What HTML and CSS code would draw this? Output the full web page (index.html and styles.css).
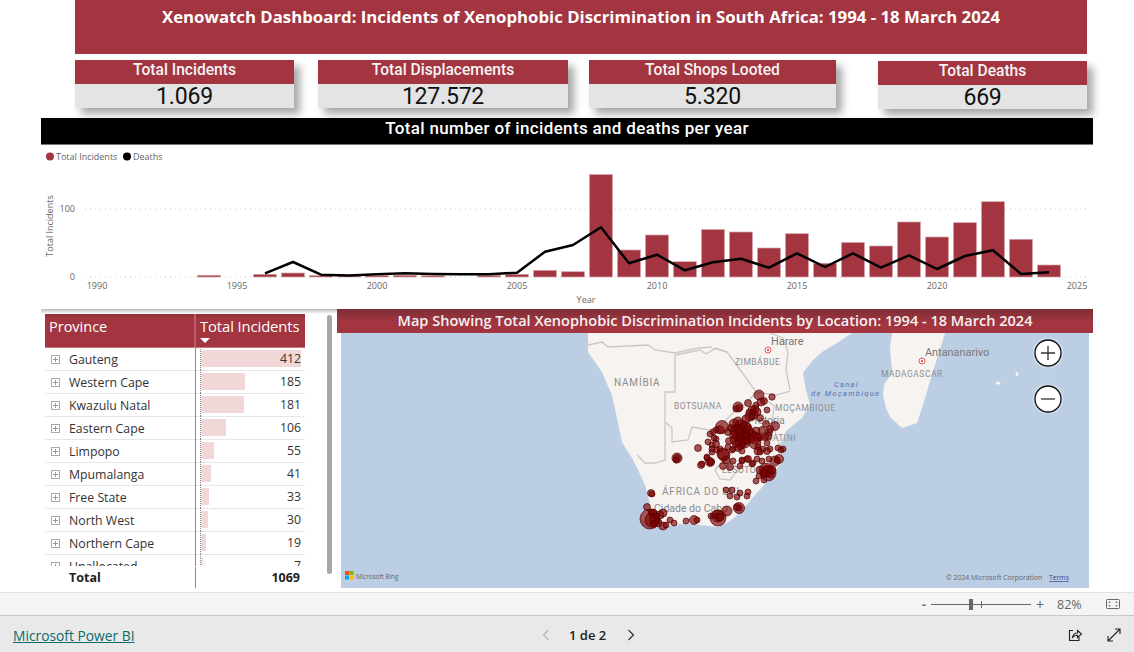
FILE: index.html
```html
<!DOCTYPE html>
<html lang="en">
<head>
<meta charset="utf-8">
<title>Xenowatch Dashboard</title>
<link rel="stylesheet" href="styles.css">
</head>
<body>
<main class="report">
  <h1 class="banner">Xenowatch Dashboard: Incidents of Xenophobic Discrimination in South Africa: 1994 - 18 March 2024</h1>
  <section class="kpis">
    <div class="kpi kpi-a"><div class="kpi-label">Total Incidents</div><div class="kpi-value">1.069</div></div>
    <div class="kpi kpi-b"><div class="kpi-label">Total Displacements</div><div class="kpi-value">127.572</div></div>
    <div class="kpi kpi-c"><div class="kpi-label">Total Shops Looted</div><div class="kpi-value">5.320</div></div>
    <div class="kpi kpi-d"><div class="kpi-label">Total Deaths</div><div class="kpi-value">669</div></div>
  </section>
  <h2 class="chart-title">Total number of incidents and deaths per year</h2>
  <svg class="chart" viewBox="41 145 1052 164" width="1052" height="164">
    <circle cx="50" cy="156.500" r="4" fill="#a33540"/>
    <text class="legend" x="56" y="160">Total Incidents</text>
    <circle cx="127" cy="156.500" r="4" fill="#000"/>
    <text class="legend" x="133" y="160">Deaths</text>
    <line class="grid" x1="85" x2="1087" y1="209" y2="209"/>
    <line class="grid" x1="85" x2="1087" y1="277" y2="277"/>
    <text class="axis" x="75" y="212" text-anchor="end">100</text>
    <text class="axis" x="75" y="280" text-anchor="end">0</text>
    <text class="legend" transform="translate(53 226) rotate(-90)" text-anchor="middle">Total Incidents</text>
    <g class="axis-x">
      <text class="axis" x="97" y="289" text-anchor="middle">1990</text>
      <text class="axis" x="237" y="289" text-anchor="middle">1995</text>
      <text class="axis" x="377" y="289" text-anchor="middle">2000</text>
      <text class="axis" x="517" y="289" text-anchor="middle">2005</text>
      <text class="axis" x="657" y="289" text-anchor="middle">2010</text>
      <text class="axis" x="797" y="289" text-anchor="middle">2015</text>
      <text class="axis" x="937" y="289" text-anchor="middle">2020</text>
      <text class="axis" x="1077" y="289" text-anchor="middle">2025</text>
    </g>
    <text class="legend" x="586" y="303" text-anchor="middle">Year</text>
    <g class="bars">
      <rect x="197.500" y="275.300" width="23" height="1.700"/>
      <rect x="253.500" y="274.300" width="23" height="2.700"/>
      <rect x="281.500" y="273" width="23" height="4"/>
      <rect x="309.500" y="275.500" width="23" height="1.500"/>
      <rect x="337.500" y="276" width="23" height="1"/>
      <rect x="365.500" y="275.700" width="23" height="1.300"/>
      <rect x="393.500" y="275.300" width="23" height="1.700"/>
      <rect x="421.500" y="275.700" width="23" height="1.300"/>
      <rect x="477.500" y="275.500" width="23" height="1.500"/>
      <rect x="505.500" y="274.300" width="23" height="2.700"/>
      <rect x="533.500" y="270.300" width="23" height="6.700"/>
      <rect x="561.500" y="271.700" width="23" height="5.300"/>
      <rect x="589.500" y="174.500" width="23" height="102.500"/>
      <rect x="617.500" y="250" width="23" height="27"/>
      <rect x="645.500" y="235" width="23" height="42"/>
      <rect x="673.500" y="261.700" width="23" height="15.300"/>
      <rect x="701.500" y="229.500" width="23" height="47.500"/>
      <rect x="729.500" y="232" width="23" height="45"/>
      <rect x="757.500" y="248" width="23" height="29"/>
      <rect x="785.500" y="233.700" width="23" height="43.300"/>
      <rect x="813.500" y="263.300" width="23" height="13.700"/>
      <rect x="841.500" y="242.500" width="23" height="34.500"/>
      <rect x="869.500" y="246" width="23" height="31"/>
      <rect x="897.500" y="222" width="23" height="55"/>
      <rect x="925.500" y="237" width="23" height="40"/>
      <rect x="953.500" y="222.700" width="23" height="54.300"/>
      <rect x="981.500" y="201.700" width="23" height="75.300"/>
      <rect x="1009.500" y="239.300" width="23" height="37.700"/>
      <rect x="1037.500" y="265" width="23" height="12"/>
    </g>
    <polyline class="trend" points="265,273.300 293,262 321,274.700 349,275.500 377,274.300 405,273.300 433,274 461,274.300 489,274.300 517,272.700 545,251.700 573,245 601,227.300 629,263.300 657,254.700 685,270.300 713,262.300 741,258.700 769,267.700 797,253.300 825,267 853,253.300 881,267.700 909,255.300 937,269 965,256 993,250.300 1021,274 1049,272.300"/>
  </svg>
  <section class="lower">
    <div class="table-panel">
      <div class="table">
        <div class="thead">
          <div class="th th-name">Province</div>
          <div class="th th-num">Total Incidents<span class="sort-arrow"></span></div>
        </div>
        <div class="tbody">
          <div class="row"><span class="expand"></span><span class="name">Gauteng</span><span class="cell"><span class="bar" style="width:100px"></span><span class="num">412</span></span></div>
          <div class="row"><span class="expand"></span><span class="name">Western Cape</span><span class="cell"><span class="bar" style="width:44px"></span><span class="num">185</span></span></div>
          <div class="row"><span class="expand"></span><span class="name">Kwazulu Natal</span><span class="cell"><span class="bar" style="width:43px"></span><span class="num">181</span></span></div>
          <div class="row"><span class="expand"></span><span class="name">Eastern Cape</span><span class="cell"><span class="bar" style="width:25px"></span><span class="num">106</span></span></div>
          <div class="row"><span class="expand"></span><span class="name">Limpopo</span><span class="cell"><span class="bar" style="width:13px"></span><span class="num">55</span></span></div>
          <div class="row"><span class="expand"></span><span class="name">Mpumalanga</span><span class="cell"><span class="bar" style="width:10px"></span><span class="num">41</span></span></div>
          <div class="row"><span class="expand"></span><span class="name">Free State</span><span class="cell"><span class="bar" style="width:8px"></span><span class="num">33</span></span></div>
          <div class="row"><span class="expand"></span><span class="name">North West</span><span class="cell"><span class="bar" style="width:7px"></span><span class="num">30</span></span></div>
          <div class="row"><span class="expand"></span><span class="name">Northern Cape</span><span class="cell"><span class="bar" style="width:5px"></span><span class="num">19</span></span></div>
          <div class="row"><span class="expand"></span><span class="name">Unallocated</span><span class="cell"><span class="bar" style="width:2px"></span><span class="num">7</span></span></div>
        </div>
        <div class="tfoot"><span class="total-name">Total</span><span class="total-num">1069</span></div>
      </div>
      <div class="scrollbar"></div>
    </div>
    <div class="map-panel">
      <h2 class="map-title">Map Showing Total Xenophobic Discrimination Incidents by Location: 1994 - 18 March 2024</h2>
      <div class="map">
        <svg class="map-svg" viewBox="341 333 748 255" width="748" height="255">
          <path class="land" d="M588 333L588 352L595 362L602 372L607 384L612 395L617 418L622 442L628 452L632 458L639 472L645 485L648 496L650 505L643 512L641 518L648 524L655 528L670 526L685 523L700 525L718 527L727 523L735 517L746 506L755 495L765 484L775 472L782 460L780 445L786 431L802 418L810 405L806 390L803 373L812 361L822 352L837 343L852 333Z"/>
          <path class="land" d="M892 333L890 348L892 372L884 385L883 395L886 408L890 417L902 428L917 423L923 405L928 388L936 362L945 333Z"/>
          <ellipse class="land" cx="998" cy="383" rx="2.500" ry="1.500"/>
          <ellipse class="land" cx="1017" cy="374" rx="1.500" ry="2"/>
          <path class="border" d="M588 345L602 342L608 347L648 345L655 350L675 353L698 348L712 347"/>
          <path class="border" d="M675 355L700 350L706 354L716 348L727 352"/>
          <path class="border" d="M675 355L675 392L665 392L665 445L665 460L655 463L645 463L637 455"/>
          <path class="border" d="M665 422L672 428L672 442L688 440L692 427L710 430L722 424L734 412L748 402L756 392"/>
          <path class="border" d="M727 352L713 348M727 352L741 371L756 392L776 395L790 391"/>
          <path class="border" d="M790 390L786 370L788 352L783 338L770 333"/>
          <path class="border" d="M756 392L774 406L772 424L780 445"/>
          <path class="border" d="M715 470L722 462L733 462L738 470L730 480L720 479Z"/>
          <text class="city" x="771" y="344.500">Harare</text>
          <circle class="capital-ring" cx="768" cy="350" r="3"/><circle class="capital" cx="768" cy="350" r="1.200"/>
          <text class="country" x="735" y="365">ZIMBÁBUE</text>
          <text class="city" x="925" y="356">Antananarivo</text>
          <circle class="capital-ring" cx="922" cy="361" r="3"/><circle class="capital" cx="922" cy="361" r="1.200"/>
          <text class="country" x="881" y="377">MADAGASCAR</text>
          <text class="sea" x="834" y="387">Canal</text>
          <text class="sea" x="811" y="396">de Moçambique</text>
          <text class="country" x="775" y="411">MOÇAMBIQUE</text>
          <text class="country-lg" x="614" y="386">NAMÍBIA</text>
          <text class="country" x="674" y="409">BOTSUANA</text>
          <text class="country-lg" x="662" y="495">ÁFRICA DO SUL</text>
          <text class="city-sm" x="654" y="512">Cidade do Cabo</text>
          <text class="country" x="722" y="473">LESOTO</text>
          <text class="country" x="754" y="441">ESWATINI</text>
          <text class="city-sm" x="748" y="424">Pretoria</text>
          <g class="bubbles">
            <circle cx="759" cy="395" r="5"/><circle cx="772" cy="397" r="3.200"/><circle cx="748" cy="403" r="3.500"/><circle cx="761" cy="402" r="4"/><circle cx="764" cy="401" r="3.500"/><circle cx="755" cy="409" r="4"/><circle cx="739" cy="408" r="3.500"/><circle cx="738" cy="407" r="5"/><circle cx="736" cy="409" r="3"/>
            <circle cx="752" cy="410" r="4"/><circle cx="757" cy="412" r="4"/><circle cx="750" cy="416" r="5"/><circle cx="746" cy="419" r="4"/><circle cx="767" cy="410" r="3"/><circle cx="754" cy="415" r="4"/><circle cx="760" cy="418" r="3.500"/><circle cx="766" cy="424" r="3.500"/><circle cx="775" cy="426" r="4.500"/><circle cx="770" cy="429" r="3.500"/><circle cx="769" cy="432" r="3.500"/><circle cx="768" cy="436" r="4"/><circle cx="753" cy="412" r="3"/><circle cx="756" cy="405" r="3"/><circle cx="749" cy="412" r="3"/><circle cx="752" cy="417" r="3"/>
            <circle cx="738" cy="422" r="5"/><circle cx="734" cy="424" r="5"/><circle cx="722" cy="427" r="6.500"/><circle cx="720" cy="430" r="4"/><circle cx="716" cy="430" r="3"/><circle cx="713" cy="432" r="3"/><circle cx="710" cy="434" r="3"/><circle cx="708" cy="442" r="3"/><circle cx="716" cy="439" r="3"/>
            <circle cx="740" cy="425" r="5"/><circle cx="745" cy="428" r="6"/><circle cx="735" cy="430" r="5"/><circle cx="742" cy="432" r="6"/><circle cx="748" cy="432" r="6"/><circle cx="738" cy="435" r="6"/><circle cx="744" cy="437" r="7"/><circle cx="750" cy="438" r="5"/><circle cx="741" cy="440" r="7"/><circle cx="735" cy="440" r="5"/><circle cx="745" cy="443" r="5"/><circle cx="741" cy="434" r="4"/><circle cx="745" cy="436" r="4"/><circle cx="740" cy="438" r="4"/><circle cx="743" cy="441" r="4"/><circle cx="737" cy="428" r="3.500"/><circle cx="744" cy="424" r="3.500"/><circle cx="748" cy="427" r="3.500"/><circle cx="733" cy="435" r="3.500"/><circle cx="739" cy="431" r="3.500"/><circle cx="747" cy="441" r="3.500"/><circle cx="742" cy="445" r="3.500"/><circle cx="736" cy="444" r="3.500"/><circle cx="752" cy="433" r="3.500"/><circle cx="728" cy="432" r="3.500"/><circle cx="731" cy="428" r="3.500"/>
            <circle cx="756" cy="431" r="4"/><circle cx="757" cy="437" r="4"/><circle cx="755" cy="438" r="6"/><circle cx="760" cy="437" r="3.500"/><circle cx="762" cy="430" r="3.500"/><circle cx="765" cy="437" r="3.500"/><circle cx="755" cy="443" r="6"/><circle cx="758" cy="447" r="3"/><circle cx="767" cy="443" r="3"/><circle cx="770" cy="449" r="3"/><circle cx="729" cy="441" r="3.500"/><circle cx="728" cy="447" r="3"/><circle cx="733" cy="449" r="3"/><circle cx="738" cy="448" r="3.500"/><circle cx="742" cy="451" r="3"/><circle cx="714" cy="438" r="3"/><circle cx="716" cy="444" r="3.500"/><circle cx="712" cy="445" r="3"/><circle cx="717" cy="450" r="3"/><circle cx="712" cy="452" r="3"/><circle cx="720" cy="449" r="3"/>
            <circle cx="724" cy="455" r="6"/><circle cx="726" cy="460" r="4"/><circle cx="733" cy="461" r="3"/><circle cx="707" cy="458" r="3"/><circle cx="711" cy="462" r="3.500"/><circle cx="702" cy="464" r="3"/><circle cx="758" cy="451" r="4"/><circle cx="760" cy="452" r="3"/><circle cx="763" cy="449" r="3"/><circle cx="767" cy="451" r="3.500"/><circle cx="778" cy="448" r="3"/><circle cx="783" cy="449" r="3"/><circle cx="781" cy="450" r="3"/>
            <circle cx="768" cy="473" r="8"/><circle cx="766" cy="470" r="7"/><circle cx="768" cy="471" r="5"/><circle cx="770" cy="474" r="4"/><circle cx="764" cy="473" r="4"/><circle cx="760" cy="470" r="4"/><circle cx="772" cy="470" r="4"/><circle cx="775" cy="461" r="5"/><circle cx="779" cy="459" r="4.500"/><circle cx="777" cy="460" r="3"/><circle cx="769" cy="459" r="3"/><circle cx="762" cy="461" r="3"/><circle cx="757" cy="459" r="3"/><circle cx="747" cy="459" r="3"/><circle cx="742" cy="461" r="3"/><circle cx="753" cy="463" r="3"/><circle cx="764" cy="480" r="3"/><circle cx="759" cy="476" r="3"/><circle cx="756" cy="481" r="3"/>
            <circle cx="677" cy="458" r="5"/><circle cx="677" cy="458" r="3.500"/><circle cx="676" cy="460" r="3"/><circle cx="698" cy="448" r="3.500"/><circle cx="712" cy="449" r="3"/><circle cx="723" cy="454" r="6"/><circle cx="707" cy="457" r="3"/><circle cx="710" cy="462" r="4.500"/><circle cx="710" cy="462" r="3"/><circle cx="701" cy="465" r="3.500"/><circle cx="723" cy="466" r="3.500"/><circle cx="730" cy="467" r="3.500"/><circle cx="740" cy="466" r="3"/><circle cx="748" cy="459" r="3.500"/><circle cx="742" cy="460" r="3"/><circle cx="752" cy="464" r="3"/><circle cx="732" cy="450" r="3"/><circle cx="740" cy="447" r="3"/>
            <circle cx="651" cy="493" r="3.500"/><circle cx="652" cy="494" r="3"/><circle cx="726" cy="490" r="3"/><circle cx="732" cy="490" r="3"/><circle cx="730" cy="496" r="3"/><circle cx="740" cy="493" r="3"/><circle cx="737" cy="497" r="3"/><circle cx="748" cy="492" r="3"/><circle cx="747" cy="496" r="3"/>
            <circle cx="647" cy="507" r="3.500"/><circle cx="650" cy="519" r="10"/><circle cx="652" cy="520" r="7"/><circle cx="653" cy="513" r="4"/><circle cx="660" cy="515" r="4"/><circle cx="663" cy="513" r="4"/><circle cx="658" cy="523" r="4"/><circle cx="655" cy="520" r="5"/><circle cx="651" cy="512" r="3"/><circle cx="656" cy="516" r="3"/><circle cx="654" cy="524" r="3.500"/><circle cx="663" cy="526" r="4"/><circle cx="666" cy="525" r="3"/><circle cx="670" cy="520" r="3"/><circle cx="674" cy="523" r="3"/>
            <circle cx="686" cy="521" r="3"/><circle cx="694" cy="520" r="4.500"/><circle cx="697" cy="520" r="3"/><circle cx="711" cy="516" r="3"/><circle cx="718" cy="518" r="8"/><circle cx="718" cy="516" r="6"/><circle cx="717" cy="516" r="3"/><circle cx="720" cy="517" r="4"/><circle cx="727" cy="511" r="5"/><circle cx="737" cy="507" r="3.500"/><circle cx="739" cy="508" r="5.500"/><circle cx="739" cy="508" r="3"/>
          </g>
          <rect x="345" y="571" width="4" height="4" fill="#f25022"/><rect x="349.500" y="571" width="4" height="4" fill="#7fba00"/><rect x="345" y="575.500" width="4" height="4" fill="#00a4ef"/><rect x="349.500" y="575.500" width="4" height="4" fill="#ffb900"/>
          <text class="attrib attrib-bing" x="356" y="579">Microsoft Bing</text>
          <text class="attrib" x="946" y="580">© 2024 Microsoft Corporation</text>
          <text class="terms" x="1049" y="580">Terms</text>
        </svg>
        <button class="map-btn map-btn-in" aria-label="Zoom in"><svg viewBox="0 0 28 28" width="28" height="28"><circle cx="14" cy="14" r="13" fill="#fff" stroke="#111" stroke-width="1.300"/><path d="M7 14H21M14 7V21" stroke="#333" stroke-width="1.300"/></svg></button>
        <button class="map-btn map-btn-out" aria-label="Zoom out"><svg viewBox="0 0 28 28" width="28" height="28"><circle cx="14" cy="14" r="13" fill="#fff" stroke="#111" stroke-width="1.300"/><path d="M7 14H21" stroke="#333" stroke-width="1.300"/></svg></button>
      </div>
    </div>
  </section>
</main>
<div class="zoom-bar">
  <span class="zoom-minus">-</span>
  <span class="slider"><span class="slider-tick"></span><span class="slider-thumb"></span></span>
  <span class="zoom-plus">+</span>
  <span class="zoom-pct">82%</span>
  <svg class="fit-icon" viewBox="0 0 14 10" width="14" height="10"><rect x=".5" y=".5" width="13" height="9" rx="1" fill="none" stroke="#666"/><path d="M3 4V3H4.500M11 4V3H9.500M3 6V7H4.500M11 6V7H9.500" fill="none" stroke="#666"/></svg>
</div>
<footer class="footer">
  <a class="brand" href="#">Microsoft Power BI</a>
  <nav class="pager">
    <svg class="chev" viewBox="0 0 8 12" width="8" height="12"><path d="M6.500 1L1.500 6L6.500 11" fill="none" stroke="#b5b5b5" stroke-width="1.200"/></svg>
    <span class="page-text">1 de 2</span>
    <svg class="chev" viewBox="0 0 8 12" width="8" height="12"><path d="M1.500 1L6.500 6L1.500 11" fill="none" stroke="#333" stroke-width="1.200"/></svg>
  </nav>
  <div class="tools">
    <svg viewBox="0 0 14 14" width="14" height="14"><path d="M5 2.500H1.500V12.500H11V9" fill="none" stroke="#222" stroke-width="1.100"/><path d="M4.500 9.500C5 6.500 7 5 9.500 5V2.500L13.500 6L9.500 9.500V7.200C7.500 7.200 5.800 8 4.500 9.500Z" fill="none" stroke="#222" stroke-width="1.100"/></svg>
    <svg viewBox="0 0 14 14" width="14" height="14"><path d="M1 13L13 1M8 1H13V6M1 8V13H6" fill="none" stroke="#222" stroke-width="1.100"/></svg>
  </div>
</footer>
</body>
</html>
```
FILE: styles.css
```css
* { box-sizing: border-box; }
html, body { margin: 0; padding: 0; }
body {
  width: 1134px;
  height: 652px;
  overflow: hidden;
  background: #fff;
  font-family: "Open Sans", "Liberation Sans", sans-serif;
  display: flex;
  flex-direction: column;
}
.report { height: 592px; display: flex; flex-direction: column; background: #fff; }

.banner {
  margin: 0 0 0 75px;
  width: 1012px;
  height: 54px;
  padding-top: 5px;
  background: #a33540;
  color: #fff;
  font-size: 16.800px;
  font-weight: 700;
  line-height: 24px;
  text-align: center;
}

.kpis { display: flex; align-items: flex-start; height: 64px; padding: 6px 0 0 75px; }
.kpi { height: 48px; background: #e4e4e4; box-shadow: 6px 6px 8px rgba(0, 0, 0, .35); }
.kpi-a { width: 219px; }
.kpi-b { width: 250px; margin-left: 24px; }
.kpi-c { width: 247px; margin-left: 21px; }
.kpi-d { width: 209px; margin: 1px 0 0 42px; }
.kpi-label {
  height: 24px;
  background: #a33540;
  color: #f4f4f4;
  font-family: Roboto, "Liberation Sans", sans-serif;
  font-size: 15.600px;
  font-weight: 500;
  line-height: 20px;
  text-align: center;
}
.kpi-value {
  height: 24px;
  color: #111;
  font-family: Roboto, "Liberation Sans", sans-serif;
  font-size: 23px;
  line-height: 25px;
  letter-spacing: -.2px;
  text-align: center;
}

.chart-title {
  margin: 0 0 0 41px;
  width: 1052px;
  height: 27px;
  background: #000;
  border-bottom: 1px solid #777;
  color: #fff;
  font-family: Roboto, "Liberation Sans", sans-serif;
  font-size: 17px;
  font-weight: 500;
  letter-spacing: .34px;
  line-height: 20px;
  text-align: center;
}
.chart { display: block; margin-left: 41px; flex: none; }
.legend, .axis { font-family: "Open Sans", sans-serif; font-size: 9px; fill: #666; }
.grid { stroke: #ccc; stroke-width: 1; stroke-dasharray: 1 4; }
.bars rect { fill: #a33540; stroke: #d5a5aa; stroke-width: .7; }
.trend { fill: none; stroke: #000; stroke-width: 2.500; stroke-linejoin: round; }

.lower { display: flex; height: 283px; }
.table-panel {
  position: relative;
  width: 296px;
  margin-left: 41px;
  padding: 5px 0 0 4px;
  background: linear-gradient(#bbb, #fff 5px);
}
.table { width: 260px; }
.thead { display: flex; height: 34px; background: linear-gradient(#8f2f39, #a33540 5px); border-bottom: 1px solid #c9767f; color: #fff; font-size: 14.500px; }
.th { line-height: 25px; }
.th-name { width: 151px; padding-left: 4px; border-right: 2px solid #b95d68; }
.th-num { position: relative; flex: 1; padding-left: 4px; white-space: nowrap; font-size: 14.800px; letter-spacing: -.1px; }
.sort-arrow {
  position: absolute;
  left: 4px;
  top: 24px;
  border-style: solid;
  border-width: 5px 5.500px 0;
  border-color: #fff transparent transparent;
}
.tbody { height: 218px; overflow: hidden; }
.row {
  display: flex;
  align-items: center;
  height: 23px;
  border-bottom: 1px solid #e6e6e6;
  color: #333;
  font-size: 12.300px;
}
.expand {
  position: relative;
  width: 9px;
  height: 9px;
  margin-left: 6px;
  border: 1px solid #aaa;
  flex: none;
}
.expand::before, .expand::after { content: ""; position: absolute; background: #999; }
.expand::before { left: 1px; right: 1px; top: 3px; height: 1px; }
.expand::after { top: 1px; bottom: 1px; left: 3px; width: 1px; }
.name { width: 135px; padding-left: 9px; white-space: nowrap; }
.cell {
  position: relative;
  display: flex;
  align-items: center;
  justify-content: flex-end;
  height: 23px;
  width: 110px;
  margin-top: -1px;
  padding-right: 4px;
  border-left: 1px solid #e8605f;
}
.cell::before {
  content: "";
  position: absolute;
  left: 4px;
  top: 0;
  bottom: 0;
  border-left: 1px dotted #888;
}
.bar { position: absolute; left: 5px; top: 3px; height: 17px; background: #f2d7d9; }
.num { position: relative; }
.tfoot { position: relative; display: flex; height: 22px; align-items: center; color: #222; font-size: 12.500px; font-weight: 700; }
.tfoot::before { content: ""; position: absolute; left: 150px; top: 1px; bottom: 0; border-left: 1px solid #e8605f; }
.total-name { padding-left: 24px; width: 150px; }
.total-num { flex: 1; text-align: right; padding-right: 5px; }
.scrollbar { position: absolute; left: 286px; top: 6px; width: 5px; height: 259px; border-radius: 3px; background: #a9a7a5; }

.map-panel { width: 756px; }
.map-title {
  margin: 0;
  height: 24px;
  background: linear-gradient(#7b2e37, #a33540 55%);
  color: #f2f2f2;
  font-size: 14.550px;
  font-weight: 600;
  line-height: 22px;
  text-align: center;
}
.map { position: relative; width: 748px; height: 255px; margin-left: 4px; background: #bccee3; overflow: hidden; }
.map-svg { display: block; }
.land { fill: #f6f3f1; }
.border { fill: none; stroke: #cac8c5; stroke-width: 1.300; }
.city { font-family: Roboto, sans-serif; font-size: 10.900px; fill: #777; }
.city-sm { font-family: Roboto, sans-serif; font-size: 10.500px; fill: #888; }
.country { font-family: Roboto, sans-serif; font-size: 8.500px; letter-spacing: .5px; fill: #8e8e8e; }
.country-lg { font-family: Roboto, sans-serif; font-size: 10px; letter-spacing: .8px; fill: #8e8e8e; }
.sea { font-family: Roboto, sans-serif; font-size: 7.500px; font-style: italic; letter-spacing: 1.300px; fill: #5472b0; }
.capital-ring { fill: #fff; stroke: #e8565a; stroke-width: 1; }
.capital { fill: #e8565a; }
.bubbles circle { fill: rgba(125, 0, 0, .65); stroke: rgba(80, 0, 0, .85); stroke-width: .8; }
.attrib { font-family: "Open Sans", sans-serif; font-size: 6.900px; fill: #666; }
.attrib-bing { font-size: 6.300px; }
.terms { font-family: "Open Sans", sans-serif; font-size: 6.800px; fill: #33478f; text-decoration: underline; }
.map-btn { position: absolute; left: 693px; width: 28px; height: 28px; padding: 0; border: 0; background: none; border-radius: 50%; box-shadow: 0 0 3px rgba(255, 255, 255, .8); }
.map-btn svg { display: block; }
.map-btn-in { top: 6px; }
.map-btn-out { top: 52px; }

.zoom-bar {
  display: flex;
  align-items: center;
  height: 24px;
  padding-left: 922px;
  background: #f4f4f4;
  border-top: 1px solid #e0e0e0;
  border-bottom: 1px solid #c8c8c8;
  color: #666;
  font-size: 12px;
}
.zoom-minus { width: 9px; font-weight: 700; }
.slider { position: relative; width: 100px; height: 1px; background: #666; }
.slider-tick { position: absolute; left: 50px; top: -3px; width: 1px; height: 7px; background: #666; }
.slider-thumb { position: absolute; left: 38px; top: -5px; width: 4px; height: 11px; background: #666; }
.zoom-plus { margin-left: 5px; font-size: 14px; }
.zoom-pct { margin-left: 13px; font-size: 12.500px; }
.fit-icon { margin-left: 24px; }

.footer {
  position: relative;
  display: flex;
  align-items: center;
  height: 36px;
  padding: 3px 0 0 13px;
  background: #e9e9e9;
}
.brand { color: #0b6a6f; font-size: 13.800px; }
.pager {
  position: absolute;
  left: 542px;
  top: 10px;
  display: flex;
  align-items: center;
  gap: 19px;
  color: #222;
  font-size: 13px;
  font-weight: 600;
}
.page-text { width: 39px; white-space: nowrap; }
.tools { position: absolute; left: 1068px; top: 12px; display: flex; gap: 25px; }
.tools svg { display: block; }
```
